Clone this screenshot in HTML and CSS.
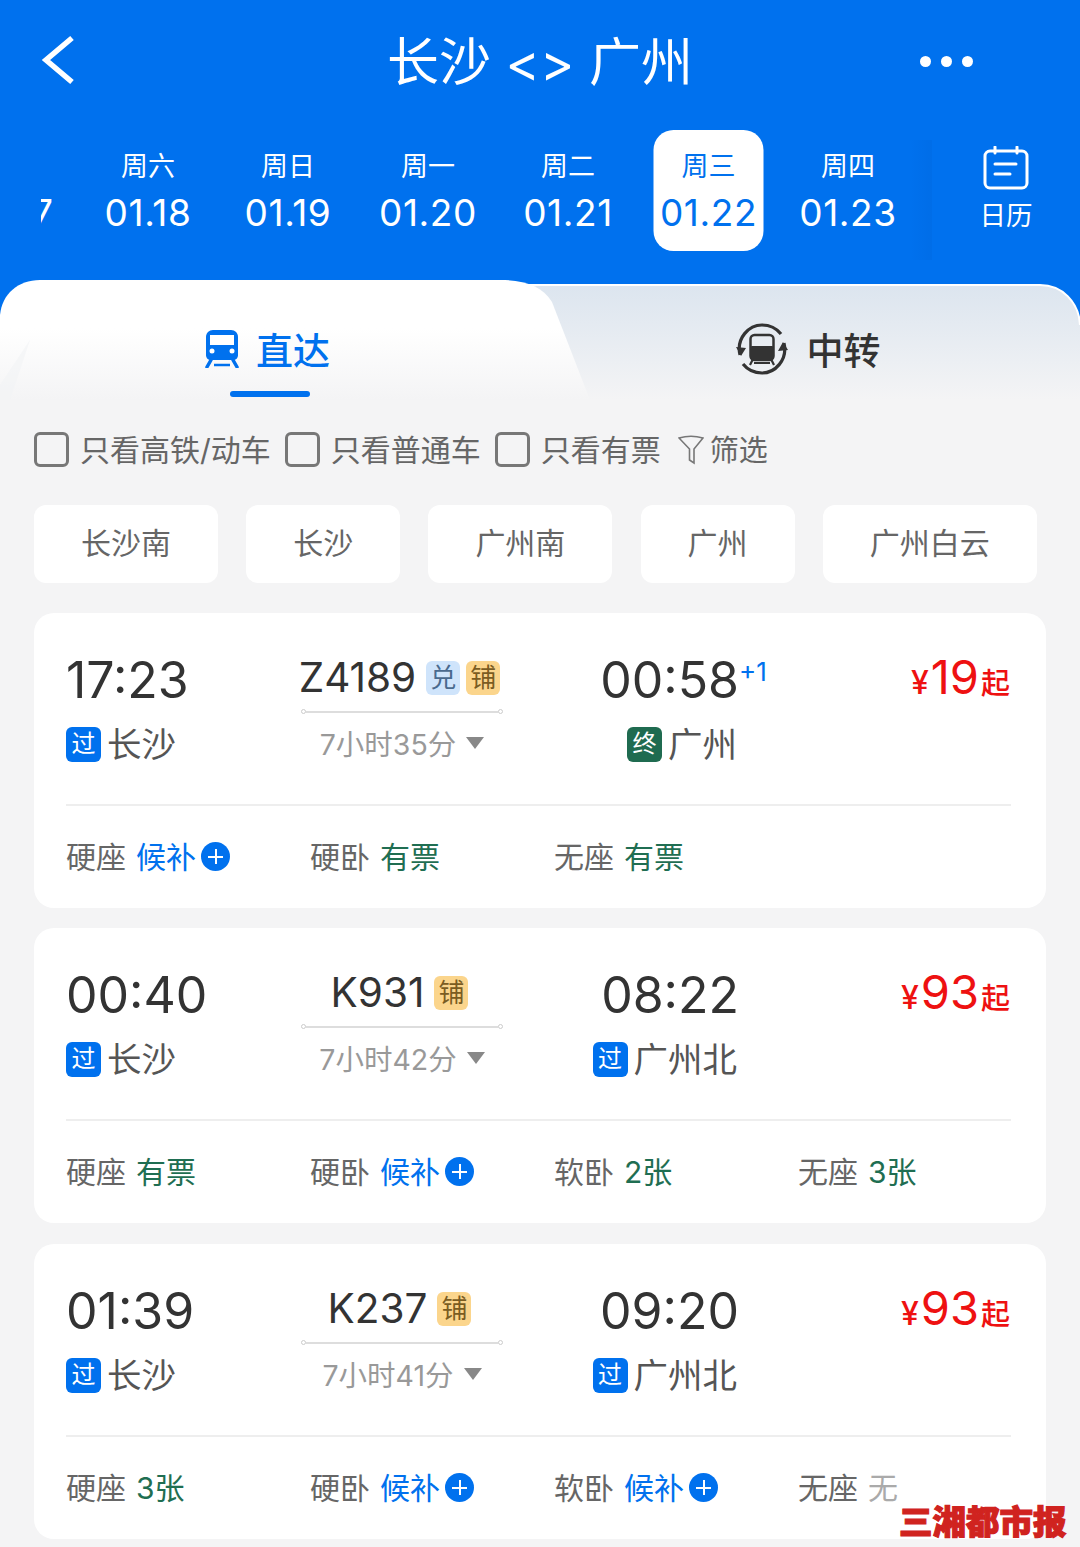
FILE: index.html
```html
<!DOCTYPE html>
<html lang="zh-CN">
<head>
    <meta charset="UTF-8">
    <meta name="viewport" content="width=device-width, initial-scale=1.0">
    <title>长沙 - 广州</title>
    <link rel="stylesheet" href="styles.css">
</head>
<body>
    <header class="top">
        <div class="nav">
            <svg class="back" viewBox="0 0 36 50" width="36" height="50"><polyline points="32,3 6,25 32,47" fill="none" stroke="#fff" stroke-width="5.5"/></svg>
            <div class="title">长沙 &lt;&gt; 广州</div>
            <div class="more"><i></i><i></i><i></i></div>
        </div>
        <div class="date-row">
            <div class="dates">
                <div class="date date-first"><span class="week">&nbsp;</span><span class="day">01.17</span></div>
                <div class="date"><span class="week">周六</span><span class="day">01.18</span></div>
                <div class="date"><span class="week">周日</span><span class="day">01.19</span></div>
                <div class="date"><span class="week">周一</span><span class="day">01.20</span></div>
                <div class="date"><span class="week">周二</span><span class="day">01.21</span></div>
                <div class="date active"><span class="week">周三</span><span class="day">01.22</span></div>
                <div class="date"><span class="week">周四</span><span class="day">01.23</span></div>
            </div>
            <div class="calendar">
                <svg viewBox="0 0 46 44" width="46" height="44" fill="none" stroke="#fff" stroke-width="3" stroke-linecap="round">
                    <rect x="2" y="5" width="42" height="37" rx="5"/>
                    <path d="M12 1v6M34 1v6M12 18h21M12 28h15"/>
                </svg>
                <span>日历</span>
            </div>
        </div>
    </header>

    <section class="tabs">
        <svg class="tabs-bg" viewBox="0 0 1080 120" width="1080" height="120">
            <defs>
                <linearGradient id="panel" x1="0" y1="0" x2="0" y2="1">
                    <stop offset="0" stop-color="#dce5ef"/>
                    <stop offset="1" stop-color="#f4f4f5"/>
                </linearGradient>
                <linearGradient id="front" x1="0" y1="0" x2="0" y2="1">
                    <stop offset="0.4" stop-color="#fff"/>
                    <stop offset="1" stop-color="#f4f4f5"/>
                </linearGradient>
            </defs>
            <path d="M500 5H1040C1062 5 1079 22 1080 45V120H500Z" fill="url(#panel)"/>
            <path d="M500 5H1040C1062 5 1079 22 1080 45" fill="none" stroke="#fff" stroke-width="2"/>
            <path d="M0 35C2 14 18 0 40 0H500C525 0 542 6 552 22L590 120H0Z" fill="url(#front)"/>
            <path d="M0 120V105L30 60L10 120Z" fill="#f2f3f5" opacity="0.6"/>
        </svg>
        <div class="tab tab-on">
            <svg viewBox="0 0 34 38" width="34" height="38">
                <path d="M8 0H26C30 0 33 3 33 7V25C33 28 31 30 28 30H6C3 30 1 28 1 25V7C1 3 4 0 8 0Z" fill="#0071ee"/>
                <rect x="5" y="5" width="24" height="10" fill="#fff"/>
                <circle cx="7" cy="21" r="2.500" fill="#fff"/>
                <circle cx="27" cy="21" r="2.500" fill="#fff"/>
                <path d="M6 30L2 37M28 30L32 37" stroke="#0071ee" stroke-width="3.500" stroke-linecap="round"/>
                <path d="M9 35H25" stroke="#0071ee" stroke-width="2.500"/>
            </svg>
            <span>直达</span>
            <b class="tab-bar"></b>
        </div>
        <div class="tab tab-off">
            <svg viewBox="0 0 54 52" width="54" height="52">
                <path d="M5 32C1 15 14 2 27 2C36 2 42 6 46 11M49 20C53 37 40 50 27 50C18 50 12 46 8 41" fill="none" stroke="#333" stroke-width="3.200"/>
                <path d="M1 24L6 33L11 25ZM43 28L48 19L53 27Z" fill="#333"/>
                <rect x="15.500" y="12" width="23" height="25" rx="4" fill="none" stroke="#333" stroke-width="2.500"/>
                <rect x="15" y="23" width="24" height="13" rx="2" fill="#333"/>
                <path d="M18 36L15 42M36 36L39 42M19 40H35" stroke="#333" stroke-width="2.200"/>
            </svg>
            <span>中转</span>
        </div>
    </section>

    <div class="filters">
        <i class="check"></i><span class="f-label">只看高铁/动车</span>
        <i class="check"></i><span class="f-label">只看普通车</span>
        <i class="check"></i><span class="f-label">只看有票</span>
        <svg class="funnel" viewBox="0 0 26 30" width="26" height="30" fill="none" stroke="#777" stroke-width="1.600"><path d="M1 3C8 1 18 1 25 3L16 14V28L11.500 25V14Z"/></svg>
        <span class="f-label f-filter">筛选</span>
    </div>

    <div class="stations">
        <div class="station">长沙南</div>
        <div class="station">长沙</div>
        <div class="station">广州南</div>
        <div class="station">广州</div>
        <div class="station">广州白云</div>
    </div>

    <main class="list">
        <article class="card">
            <div class="trip">
                <div class="depart">
                    <div class="time">17:23</div>
                    <div class="stop"><em class="tag blue">过</em>长沙</div>
                </div>
                <div class="train">
                    <div class="no">Z4189<em class="mark mark-dui">兑</em><em class="mark mark-pu">铺</em></div>
                    <div class="route"><i></i><b></b><i></i></div>
                    <div class="dur">7小时35分<u></u></div>
                </div>
                <div class="arrive">
                    <div class="time">00:58<sup>+1</sup></div>
                    <div class="stop"><em class="tag green">终</em>广州</div>
                </div>
                <div class="price"><small>¥</small>19<span>起</span></div>
            </div>
            <div class="seats">
                <div class="seat">硬座<span class="wait">候补</span><i class="plus"></i></div>
                <div class="seat">硬卧<span class="ok">有票</span></div>
                <div class="seat">无座<span class="ok">有票</span></div>
            </div>
        </article>

        <article class="card">
            <div class="trip">
                <div class="depart">
                    <div class="time">00:40</div>
                    <div class="stop"><em class="tag blue">过</em>长沙</div>
                </div>
                <div class="train">
                    <div class="no">K931<em class="mark mark-pu">铺</em></div>
                    <div class="route"><i></i><b></b><i></i></div>
                    <div class="dur">7小时42分<u></u></div>
                </div>
                <div class="arrive">
                    <div class="time">08:22</div>
                    <div class="stop"><em class="tag blue">过</em>广州北</div>
                </div>
                <div class="price"><small>¥</small>93<span>起</span></div>
            </div>
            <div class="seats">
                <div class="seat">硬座<span class="ok">有票</span></div>
                <div class="seat">硬卧<span class="wait">候补</span><i class="plus"></i></div>
                <div class="seat">软卧<span class="ok">2张</span></div>
                <div class="seat">无座<span class="ok">3张</span></div>
            </div>
        </article>

        <article class="card">
            <div class="trip">
                <div class="depart">
                    <div class="time">01:39</div>
                    <div class="stop"><em class="tag blue">过</em>长沙</div>
                </div>
                <div class="train">
                    <div class="no">K237<em class="mark mark-pu">铺</em></div>
                    <div class="route"><i></i><b></b><i></i></div>
                    <div class="dur">7小时41分<u></u></div>
                </div>
                <div class="arrive">
                    <div class="time">09:20</div>
                    <div class="stop"><em class="tag blue">过</em>广州北</div>
                </div>
                <div class="price"><small>¥</small>93<span>起</span></div>
            </div>
            <div class="seats">
                <div class="seat">硬座<span class="ok">3张</span></div>
                <div class="seat">硬卧<span class="wait">候补</span><i class="plus"></i></div>
                <div class="seat">软卧<span class="wait">候补</span><i class="plus"></i></div>
                <div class="seat">无座<span class="none">无</span></div>
            </div>
        </article>
    </main>

    <div class="watermark">三湘都市报</div>
</body>
</html>
```

FILE: styles.css
```css
* {
    box-sizing: border-box;
}

html, body {
    margin: 0;
    height: 1547px;
    overflow: hidden;
}

body {
    position: relative;
    background: #f4f4f5;
    font-family: 'Inter', 'Noto Sans CJK SC', sans-serif;
    color: #333;
}

em, i, u, b {
    font-style: normal;
    text-decoration: none;
}

/* header */
.top {
    background: #0071ee;
    height: 280px;
    color: #fff;
}

.nav {
    height: 125px;
    display: grid;
    grid-template-columns: 1fr auto 1fr;
    align-items: center;
    padding: 0 40px;
}

.back {
    margin-top: -5px;
}

.title {
    font-size: 52px;
    line-height: 60px;
    white-space: nowrap;
}

.more {
    justify-self: end;
    display: flex;
    gap: 10px;
    margin: -2px 67px 0 0;
}

.more i {
    width: 11px;
    height: 11px;
    border-radius: 50%;
    background: #fff;
}

.date-row {
    display: flex;
    margin-top: 5px;
    padding-left: 41px;
}

.dates {
    position: relative;
    width: 891px;
    height: 121px;
    display: flex;
    overflow: hidden;
}

.date {
    flex: 0 0 110px;
    margin: 0 15px;
    height: 121px;
    padding-top: 19px;
    text-align: center;
    border-radius: 20px;
}

.date-first {
    margin-left: -85px;
    margin-right: 12px;
}

.date.active {
    background: #fff;
    color: #0071ee;
    transform: translateX(0.5px);
}

.week {
    display: block;
    font-size: 27px;
    line-height: 36px;
}

.day {
    display: block;
    font-size: 37px;
    line-height: 56px;
    letter-spacing: 0.6px;
    white-space: nowrap;
}

.calendar {
    position: relative;
    flex: 1;
    padding-top: 16px;
    display: flex;
    flex-direction: column;
    align-items: center;
    font-size: 26.500px;
    line-height: 36px;
}

.calendar::before {
    content: '';
    position: absolute;
    left: -22px;
    top: 10px;
    width: 22px;
    height: 120px;
    background: linear-gradient(90deg, rgba(0, 90, 200, 0), rgba(0, 90, 200, 0.16));
}

.calendar span {
    margin-top: 7px;
}

/* tabs */
.tabs {
    position: relative;
    height: 120px;
    background: #0071ee;
    display: grid;
    grid-template-columns: 540px 540px;
}

.tabs-bg {
    position: absolute;
    left: 0;
    top: 0;
}

.tab {
    position: relative;
    display: flex;
    align-items: center;
    justify-content: center;
    font-size: 37px;
    font-weight: 500;
    height: 120px;
    padding: 17px 5px 0 0;
}

.tab-on {
    color: #0071ee;
    gap: 17px;
}

.tab-off {
    gap: 18px;
}

.tab-bar {
    position: absolute;
    left: 230px;
    top: 111px;
    width: 80px;
    height: 6px;
    border-radius: 3px;
    background: #0071ee;
}

/* filters */
.filters {
    display: flex;
    align-items: center;
    height: 35px;
    margin-top: 32px;
    padding-left: 34px;
    font-size: 30px;
    color: #666;
}

.check {
    width: 35px;
    height: 35px;
    border: 3px solid #777;
    border-radius: 6px;
    margin-right: 11px;
}

.f-label {
    margin: -4px 14px 0 0;
    white-space: nowrap;
}

.funnel {
    margin: 0 6px 0 3px;
}

.f-filter {
    font-size: 29px;
}

.stations {
    display: flex;
    gap: 28.200px;
    margin-top: 38px;
    padding-left: 34px;
}

.station {
    height: 78px;
    line-height: 76px;
    padding: 0 47px;
    background: #fff;
    border-radius: 12px;
    font-size: 30px;
    color: #666;
}

/* train cards */
.list {
    margin-top: 30px;
    padding: 0 34px;
}

.card {
    height: 295px;
    margin-bottom: 20px;
    padding: 0 35px 0 32px;
    background: #fff;
    border-radius: 20px;
}

.card:nth-child(2) {
    margin-bottom: 21px;
}

.trip {
    height: 193px;
    padding-top: 36px;
    display: grid;
    grid-template-columns: 220px 232px 221px 1fr;
    border-bottom: 2px solid #eee;
}

.time {
    position: relative;
    font-size: 50px;
    line-height: 62px;
    color: #333;
}

.time sup {
    position: absolute;
    left: 100%;
    top: 3px;
    font-size: 26px;
    line-height: 40px;
    color: #0071ee;
}

.stop {
    display: flex;
    align-items: center;
    margin-top: 9px;
    height: 44px;
    font-size: 34.500px;
    color: #555;
    gap: 6px;
}

.tag {
    width: 35px;
    height: 35px;
    margin-top: 4px;
    border-radius: 6px;
    font-size: 24px;
    line-height: 33px;
    text-align: center;
    color: #fff;
}

.tag.blue {
    background: #0071ee;
}

.tag.green {
    background: #1f6b50;
}

.arrive {
    text-align: right;
}

.arrive .stop {
    justify-content: flex-end;
    padding-right: 2px;
}

.train {
    display: flex;
    flex-direction: column;
    align-items: center;
}

.no {
    display: flex;
    align-items: center;
    font-size: 40.500px;
    line-height: 50px;
    height: 50px;
    margin: 4px 0 0 -5px;
    color: #333;
}

.mark {
    width: 34px;
    height: 34px;
    margin-left: 6px;
    border-radius: 6px;
    font-size: 26px;
    line-height: 33px;
    text-align: center;
}

.no .mark:first-of-type {
    margin-left: 10px;
}

.mark-dui {
    background: #cfe4fb;
    color: #4a6a8e;
}

.mark-pu {
    background: #fbd58c;
    color: #7a5c22;
}

.route {
    display: flex;
    align-items: center;
    width: 202px;
    margin-top: 6px;
}

.route i {
    width: 5px;
    height: 5px;
    border: 1px solid #ccc;
    border-radius: 50%;
}

.route b {
    flex: 1;
    height: 2px;
    background: #ddd;
}

.dur {
    display: flex;
    align-items: center;
    margin-top: 6px;
    height: 44px;
    font-size: 28.500px;
    color: #999;
}

.dur u {
    width: 0;
    height: 0;
    margin: 2px 0 0 10px;
    border-left: 9px solid transparent;
    border-right: 9px solid transparent;
    border-top: 12px solid #888;
}

.price {
    display: flex;
    align-items: baseline;
    justify-content: flex-end;
    height: 56px;
    line-height: 56px;
    padding-right: 1px;
    font-size: 47px;
    color: #ee1111;
}

.price small {
    font-size: 32px;
    font-weight: 500;
    margin-right: 2px;
}

.price span {
    font-size: 29px;
    font-weight: 500;
    margin-left: 2px;
}

.seats {
    display: grid;
    grid-template-columns: repeat(4, 244px);
    align-items: center;
    height: 100px;
    padding-bottom: 3px;
}

.seat {
    display: flex;
    align-items: center;
    font-size: 30px;
    color: #666;
}

.seat span {
    margin-left: 10px;
}

.wait {
    color: #0071ee;
}

.ok {
    color: #1f6e52;
}

.none {
    color: #aaa;
}

.plus {
    position: relative;
    width: 29px;
    height: 29px;
    margin: 4px 0 0 5px;
    border-radius: 50%;
    background: #0071ee;
}

.plus::before, .plus::after {
    content: '';
    position: absolute;
    background: #fff;
}

.plus::before {
    left: 7px;
    top: 13.500px;
    width: 15px;
    height: 2px;
}

.plus::after {
    left: 13.500px;
    top: 7px;
    width: 2px;
    height: 15px;
}

.watermark {
    position: absolute;
    left: 899px;
    top: 1501px;
    font-size: 33.500px;
    line-height: 42px;
    font-weight: 900;
    color: #d0231f;
    -webkit-text-stroke: 1.200px #d0231f;
    white-space: nowrap;
}
```
